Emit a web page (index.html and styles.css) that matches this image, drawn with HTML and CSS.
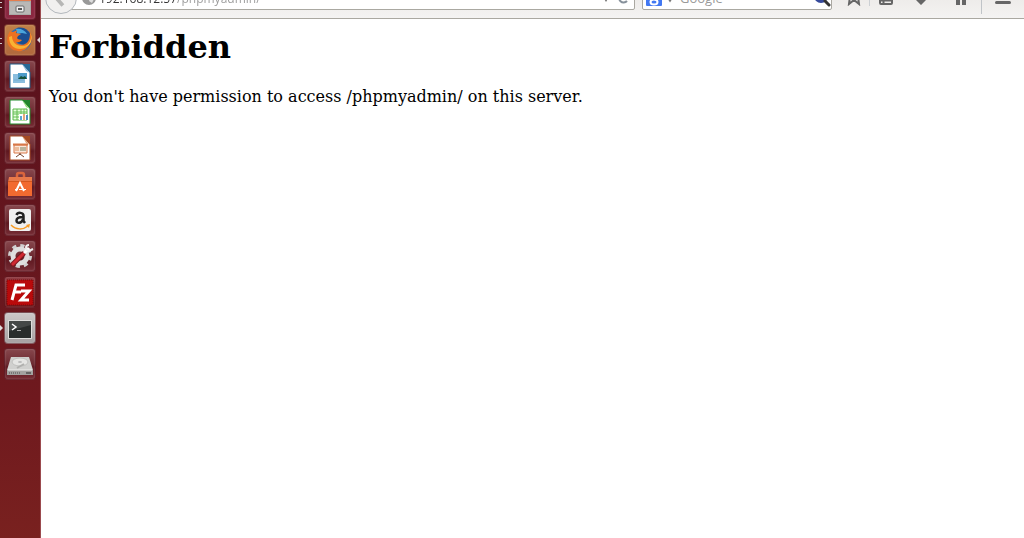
FILE: index.html
```
<!DOCTYPE html>
<html lang="en">
<head>
  <meta charset="UTF-8" />
  <meta name="viewport" content="width=device-width, initial-scale=1.0" />
  <title>403 Forbidden</title>
  <link rel="stylesheet" href="styles.css">
</head>
<body>
  <nav class="launcher" aria-label="Launcher">
    <button class="tile files running multi" aria-label="Files">
      <svg viewBox="0 0 32 32"><path d="M5 4h22v23H5z" fill="#c9c9c7"/><path d="M5 4h22v11H5z" fill="#e47e4e"/><path d="M5 13h22v14H5z" fill="#aaa9a7"/><path d="M6 14h20v12H6z" fill="#b9b8b6"/><rect x="12" y="18" width="8" height="6" rx="1" fill="#eee" stroke="#666"/><path d="M14 20h4v2h-4z" fill="#555"/></svg>
    </button>
    <button class="tile firefox running multi active" aria-label="Firefox">
      <svg viewBox="0 0 32 32"><circle cx="16" cy="15.500" r="11.500" fill="#2c70b8"/><path d="M13 4c7-2 14 3 14 11l-4 7-9-3-5-9z" fill="#1b4e91"/><path d="M12 5c4-1 9 1 11 5l-5-1-5 1z" fill="#4aa6dc"/><path d="M6 7c-3 5-4 10-1 15 4 6 13 7 18 2 3-3 5-7 5-11l-2-5c0 6-1 10-5 12-4 2-8 0-9-2 3 1 5-1 6-2-2-1-4 0-5-2l1-2 3-2-5-1 1-3-4 2z" fill="#ed7121"/><path d="M5 13c0 8 5 12 11 12 5 0 9-3 11-8-2 3-5 5-9 5-6 0-10-4-10-10z" fill="#f9b233"/><path d="M26 8c2 5 1 10-3 14 4-2 6-8 3-14z" fill="#ffdc58"/></svg>
    </button>
    <button class="tile writer" aria-label="LibreOffice Writer">
      <svg viewBox="0 0 32 32"><path d="M6 4h13l7 8v16H6z" fill="#fff" stroke="#205d86"/><path d="M18 4h8v9z" fill="#276a96"/><path d="M18 4l8 9-4-2z" fill="#8cbada"/><path d="M9 14h12v9H9z" fill="#8bbede"/><path d="M14 13h9v6h-9z" fill="#4c9bc8"/><path d="M14 19l3-3 2 1 2-1 2 3z" fill="#17533c"/><path d="M10 20h10" stroke="#74aed2"/></svg>
    </button>
    <button class="tile calc" aria-label="LibreOffice Calc">
      <svg viewBox="0 0 32 32"><path d="M6 4h13l7 8v16H6z" fill="#fff" stroke="#238b2c"/><path d="M18 4h8v9z" fill="#21852c"/><path d="M18 4l8 9-4-2z" fill="#8edb76"/><path d="M9 13h14v11H9z" fill="#eaffdf" stroke="#58b848"/><path d="M9 16h14M9 18h14M9 21h14M13 13v11M17 13v11M20 13v11" stroke="#62bd53"/><path d="M15 18h8v6h-8z" fill="#fff"/><path d="M16 20h2v4h-2z" fill="#5aa7d3"/><path d="M19 18h2v6h-2z" fill="#e4a779"/><path d="M22 19h2v5h-2z" fill="#4e91c4"/></svg>
    </button>
    <button class="tile impress" aria-label="LibreOffice Impress">
      <svg viewBox="0 0 32 32"><path d="M6 4h13l7 8v16H6z" fill="#fff" stroke="#a44b24"/><path d="M18 4h8v9z" fill="#a44b24"/><path d="M18 4l8 9-4-2z" fill="#dea078"/><path d="M10 13h13v8H10z" fill="#fbe7da" stroke="#d87849"/><path d="M9 12.500h15" stroke="#d87849" stroke-width="2"/><path d="M11 16h4M11 18h4" stroke="#dc905e"/><path d="M16 15h6v4h-6z" fill="#b9b39b"/><path d="M16 21v2M16 22l-4 3M16 22l4 3" stroke="#77452d"/></svg>
    </button>
    <button class="tile software" aria-label="Ubuntu Software Center">
      <svg viewBox="0 0 32 32"><path d="M13 9V7q0-2 2-2h3q2 0 2 2v2" fill="none" stroke="#d9643c" stroke-width="2.500"/><path d="M5 9h23v5H4z" fill="#e8794a"/><path d="M4 13h24v15H4z" fill="#f26a30"/><path d="M4 13.500h24" stroke="#d4571f"/><path d="M12 23l4-8 4 8" fill="none" stroke="#fff" stroke-width="2"/><path d="M11 21.500h3M15 21.500h3M19 21.500h3" stroke="#fff"/></svg>
    </button>
    <button class="tile amazon" aria-label="Amazon">
      <svg viewBox="0 0 32 32"><rect x="5" y="5" width="22" height="22" rx="2" fill="#f0f0f0"/><path d="M12.500 11c1-3 7-3 7 1v5l1.500 2M19 13c-4 0-6.500 1-6.500 3.500 0 3.500 5 3 6.500-1" fill="none" stroke="#222" stroke-width="2.500"/><path d="M7 21c5 5 12 5 17 1" fill="none" stroke="#f79b24" stroke-width="1.500"/><path d="M22 21l4-1-1 4z" fill="#f79b24"/></svg>
    </button>
    <button class="tile settings" aria-label="System Settings">
      <svg viewBox="0 0 32 32"><circle cx="16" cy="16" r="10" fill="none" stroke="#cfcfcf" stroke-width="4" stroke-dasharray="4 3.850"/><circle cx="16" cy="16" r="7" fill="none" stroke="#dedede" stroke-width="5"/><path d="M9 24L19 14" stroke="#7d171e" stroke-width="5" stroke-linecap="round"/><path d="M9 24L19 14" stroke="#cf2932" stroke-width="3" stroke-linecap="round"/><path d="M20 13l5-5" stroke="#fff" stroke-width="3"/><path d="M25 5c-4 0-4 5 0 6l4-2" fill="none" stroke="#eee" stroke-width="2"/></svg>
    </button>
    <button class="tile filezilla" aria-label="FileZilla">
      <svg viewBox="0 0 32 32"><rect x="3" y="4" width="26" height="25" fill="#b90a0b"/><rect x="3" y="4" width="26" height="25" fill="none" stroke="#800709" stroke-dasharray="1 1"/><path d="M8 24l4-15h9M10 16h7M17 15h8l-8 9h8" fill="none" stroke="#fff" stroke-width="3"/></svg>
    </button>
    <button class="tile terminal running" aria-label="Terminal">
      <svg viewBox="0 0 32 32"><rect x="4" y="8" width="24" height="19" rx="1" fill="#dededc"/><rect x="5" y="9" width="22" height="17" fill="#292d2c"/><path d="M5 9h22v4L5 19z" fill="#444847"/><path d="M8 12l4 3-4 3" fill="none" stroke="#fff" stroke-width="1.500"/><path d="M13 18.500h4" stroke="#aaa"/></svg>
    </button>
    <button class="tile disk" aria-label="Disk">
      <svg viewBox="0 0 32 32"><path d="M7 9h18l4 13H3z" fill="#d0d0ce"/><path d="M3 22h26v5H3z" fill="#a3a3a1"/><ellipse cx="16" cy="14" rx="8" ry="4" fill="#e5e5e3" stroke="#c0c0be"/><ellipse cx="16" cy="14" rx="2" ry="1" fill="#bbb"/><path d="M13 20l7-4" stroke="#b0b0ae" stroke-width="2"/><path d="M4 22h24" stroke="#f0f0ef"/><path d="M5 25h12" stroke="#777" stroke-width="2" stroke-dasharray="1 1"/><path d="M22 25h5" stroke="#666" stroke-width="2"/></svg>
    </button>
  </nav>

  <div class="browser">
    <header class="toolbar">
      <button class="back" aria-label="Back">
        <svg viewBox="0 0 32 32"><path d="M18 8l-7 8 7 8" fill="none" stroke="#b6b6b5" stroke-width="4"/></svg>
      </button>
      <div class="field address">
        <svg class="globe" viewBox="0 0 14 14"><circle cx="7" cy="7" r="7" fill="#999"/><path d="M2 3l4-1 2 2-2 3-2-1zM8 7l4 1-2 4-3-2z" fill="#ddd"/></svg>
        <input class="url" type="text" value="192.168.12.57/phpmyadmin/" aria-label="Address">
        <button class="mini" aria-label="History"><svg viewBox="0 0 14 14"><path d="M4 6h6l-3 5z" fill="#777"/></svg></button>
        <button class="mini" aria-label="Reload"><svg viewBox="0 0 14 14"><path d="M11 4a4.500 4.500 0 1 0 0 6" fill="none" stroke="#87919b" stroke-width="2"/><path d="M12 1v5H8z" fill="#87919b"/></svg></button>
      </div>
      <div class="field search">
        <button class="engine" aria-label="Search engine">
          <svg viewBox="0 0 16 16"><rect width="16" height="16" rx="1" fill="#4278f2"/><path d="M12 2H8C4 2 4 7 8 7c4 0 4-5 0-5M7 8l3 2" fill="none" stroke="#fff" stroke-width="2"/><ellipse cx="8" cy="12" rx="3.500" ry="2.500" fill="none" stroke="#fff" stroke-width="2"/></svg>
          <svg viewBox="0 0 14 14"><path d="M4 6h6l-3 5z" fill="#777"/></svg>
        </button>
        <input class="query" type="text" placeholder="Google" aria-label="Search">
        <button class="go" aria-label="Search"><svg viewBox="0 0 18 18"><circle cx="8" cy="7" r="5.500" fill="#9ab2e8" stroke="#35499b" stroke-width="3"/><path d="M12 12l4 4" stroke="#333" stroke-width="3" stroke-linecap="round"/></svg></button>
      </div>
      <div class="actions">
        <button class="star" aria-label="Bookmark"><svg viewBox="0 0 16 16"><path d="M4 6L3 14l5-4 5 4-1-8" fill="none" stroke="#666" stroke-width="2"/></svg></button>
        <button class="list" aria-label="Bookmarks list"><svg viewBox="0 0 16 16"><rect x="2" y="2" width="12" height="12" rx="1" fill="none" stroke="#666" stroke-width="2"/><path d="M2 10.500h12M5.500 10v4" stroke="#666" stroke-width="2"/></svg></button>
        <button aria-label="Downloads"><svg viewBox="0 0 16 16"><path d="M5 0h6v8h4l-7 7-7-7h4z" fill="#666"/></svg></button>
        <button aria-label="Home"><svg viewBox="0 0 16 16"><path d="M8 0l7 7h-2v8H9V9H7v6H3V7H1z" fill="#666"/></svg></button>
        <button class="menu" aria-label="Menu"><svg viewBox="0 0 16 16"><path d="M1.500 2h13M1.500 7h13M1.500 12.500h13" stroke="#666" stroke-width="3" stroke-linecap="round"/></svg></button>
      </div>
    </header>
    <main class="page">
      <h1>Forbidden</h1>
      <p>You don't have permission to access /phpmyadmin/ on this server.</p>
    </main>
  </div>
</body>
</html>
```
FILE: styles.css
```
* {
  box-sizing: border-box;
}
body {
  margin: 0;
  display: flex;
  height: 100vh;
  overflow: hidden;
  background: #fff;
}
button {
  padding: 0;
  border: none;
  background: none;
  flex: none;
}
svg {
  display: block;
}
input {
  min-width: 0;
  flex: 1;
  padding: 0;
  border: none;
  outline: none;
  background: none;
  font: 12px "Open Sans", sans-serif;
}

/* launcher */
.launcher {
  flex: none;
  width: 41px;
  padding: 0 4px;
  display: flex;
  flex-direction: column;
  gap: 4px;
  margin-top: -12px;
  background: linear-gradient(#56111d, #6f191e 75%, #79211f);
  border-right: 1px solid #9b4a4e;
}
.tile {
  position: relative;
  width: 32px;
  height: 32px;
  border-radius: 4px;
  background: linear-gradient(#87474d, #6d2a31 50%, #5f1820 60%, #752c34);
  border: 1px solid rgba(90,25,35,0.6);
  box-shadow: inset 0 0 2px rgba(255,255,255,0.3);
}
.tile svg {
  width: 32px;
  height: 32px;
  margin: -1px;
}
.tile.files {
  background: #8b2740;
}
.tile.firefox {
  background: linear-gradient(#c08048, #b0683c);
}
.tile.terminal {
  background: linear-gradient(#ccc8c9, #a6a0a1);
}
.tile.filezilla {
  background: linear-gradient(#8f3a40, #6d1519);
}
.running::before,
.active::after {
  content: "";
  position: absolute;
  top: 12px;
  border: 3px solid transparent;
}
.running::before {
  left: -5px;
  border-left-color: #ddd;
  border-right-width: 0;
}
.active::after {
  right: -5px;
  border-right-color: #ddd;
  border-left-width: 0;
}
/* two short marks for several open windows */
.multi::before {
  width: 2px;
  height: 4px;
  top: 13px;
  border: solid #ccc;
  border-width: 1px 0;
}

/* browser */
.browser {
  flex: 1;
  min-width: 0;
}
.toolbar {
  display: flex;
  align-items: flex-end;
  height: 19px;
  padding: 0 0 4px 4px;
  overflow: hidden;
  background: linear-gradient(#eeecea, #f4f3f2);
  border-bottom: 1px solid #aaa8a1;
}
.back {
  position: relative;
  width: 32px;
  height: 32px;
  border: 1px solid #b3b8bd;
  border-radius: 50%;
  background: #f1f0ef;
}
.field {
  display: flex;
  align-items: center;
  height: 24px;
  margin-bottom: 4px;
  border: 1px solid #aaa8a1;
  border-radius: 2px;
  background: #fff;
}
.address {
  flex: 1;
  margin-left: -8px;
  padding: 0 4px 0 12px;
  gap: 3px;
}
.globe,
.mini svg {
  flex: none;
  width: 14px;
  height: 14px;
}
/* host is dark, path is dimmed */
.url {
  color: transparent;
  caret-color: #333;
  background: linear-gradient(to right, #333 78px, #999 78px);
  -webkit-background-clip: text;
  background-clip: text;
}
.search {
  width: 190px;
  margin-left: 7px;
  padding: 0 0 0 3px;
  gap: 2px;
}
.engine {
  display: flex;
  align-items: center;
}
.engine svg {
  width: 16px;
  height: 16px;
}
.query {
  font-size: 13px;
}
.query::placeholder {
  color: #999;
  opacity: 1;
}
.go svg {
  width: 18px;
  height: 18px;
}
.actions {
  flex: none;
  display: flex;
  align-items: center;
  margin-left: 14px;
}
.actions button {
  width: 40px;
  height: 16px;
}
.actions svg {
  width: 16px;
  height: 16px;
  margin: 0 auto;
}
.actions .star {
  width: 16px;
}
.actions .list {
  width: 32px;
  margin-left: 7px;
  border-left: 1px solid #ccd0d4;
}
.actions .menu {
  width: 43px;
  height: 32px;
  border-left: 1px solid #c0c4c8;
}
.page {
  padding: 9px 8px;
  font-family: "DejaVu Serif", serif;
  font-size: 16px;
  color: #000;
}
.page h1 {
  margin: 0 0 21px;
  font-size: 32px;
  line-height: 38px;
}
.page p {
  margin: 0;
  line-height: 19px;
}
```
